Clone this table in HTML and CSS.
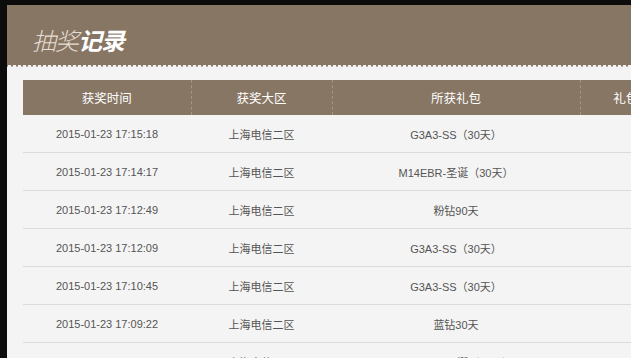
FILE: index.html
```html
<!DOCTYPE html>
<html lang="zh">
<head>
<meta charset="utf-8">
<link rel="stylesheet" href="styles.css">
</head>
<body>
<div class="modal">
  <div class="modal-head">
    <h1 class="title"><span class="t-light">抽奖</span><span class="t-bold">记录</span></h1>
    <div class="scallop"></div>
  </div>
  <div class="modal-body">
    <table class="records">
      <colgroup>
        <col class="c1"><col class="c2"><col class="c3"><col class="c4">
      </colgroup>
      <thead>
        <tr><th>获奖时间</th><th>获奖大区</th><th>所获礼包</th><th>礼包领取</th></tr>
      </thead>
      <tbody>
        <tr><td>2015-01-23 17:15:18</td><td>上海电信二区</td><td>G3A3-SS（30天）</td><td></td></tr>
        <tr><td>2015-01-23 17:14:17</td><td>上海电信二区</td><td>M14EBR-圣诞（30天）</td><td></td></tr>
        <tr><td>2015-01-23 17:12:49</td><td>上海电信二区</td><td>粉钻90天</td><td></td></tr>
        <tr><td>2015-01-23 17:12:09</td><td>上海电信二区</td><td>G3A3-SS（30天）</td><td></td></tr>
        <tr><td>2015-01-23 17:10:45</td><td>上海电信二区</td><td>G3A3-SS（30天）</td><td></td></tr>
        <tr><td>2015-01-23 17:09:22</td><td>上海电信二区</td><td>蓝钻30天</td><td></td></tr>
        <tr><td>2015-01-23 17:08:33</td><td>上海电信二区</td><td>M14EBR-圣诞（30天）</td><td></td></tr>
      </tbody>
    </table>
  </div>
</div>
</body>
</html>
```
FILE: styles.css
```css
html, body {
  margin: 0;
  height: 100%;
  overflow: hidden;
}
body {
  background: #0c0c0d;
  padding: 5px 0 0 7px;
  box-sizing: border-box;
  font-family: "Liberation Sans", "Noto Sans CJK SC", sans-serif;
}
.modal {
  width: 700px;
  background: #f4f4f4;
  height: 400px;
}
.modal-head {
  height: 62px;
  background: #877664;
  display: flex;
  flex-direction: column;
  justify-content: space-between;
}
.title {
  margin: 0;
  padding: 22px 0 0 25px;
  font-size: 24px;
  line-height: 26px;
  font-style: italic;
  font-family: "Noto Sans CJK SC", sans-serif;
  font-weight: 400;
  letter-spacing: -1px;
}
.t-light {
  color: #e6ddd3;
  font-weight: 300;
}
.t-bold {
  color: #ffffff;
  font-weight: 700;
}
.scallop {
  height: 3px;
  background-image: radial-gradient(circle at 2.5px 3px, #f4f4f4 1.8px, transparent 2.3px);
  background-size: 5px 3px;
  background-repeat: repeat-x;
}
.modal-body {
  padding: 13px 0 0 16px;
}
.records {
  border-collapse: collapse;
  table-layout: fixed;
  width: 673px;
}
.c1 { width: 168px; }
.c2 { width: 141px; }
.c3 { width: 248px; }
.c4 { width: 116px; }
.records th {
  height: 35px;
  padding: 0;
  background: #877664;
  color: #ffffff;
  font-weight: 400;
  font-size: 12.5px;
  font-family: "Noto Sans CJK SC", sans-serif;
  border-left: 1px dashed #a59583;
  white-space: nowrap;
}
.records th:first-child {
  border-left: none;
}
.records td {
  height: 37px;
  padding: 0;
  text-align: center;
  color: #555555;
  font-size: 11px;
  border-bottom: 1px solid #dcdcdc;
  white-space: nowrap;
}
```
